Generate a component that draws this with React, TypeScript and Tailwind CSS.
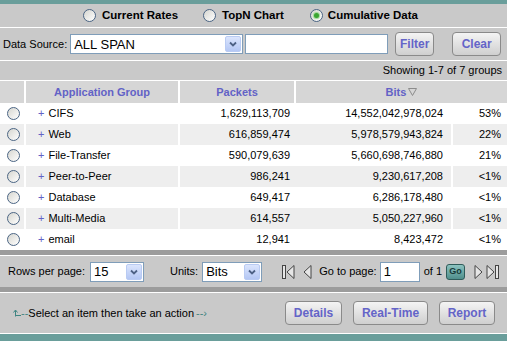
import React from "react";

type Row = {
  name: string;
  packets: string;
  bits: string;
  pct: string;
};

const rows: Row[] = [
  { name: "CIFS", packets: "1,629,113,709", bits: "14,552,042,978,024", pct: "53%" },
  { name: "Web", packets: "616,859,474", bits: "5,978,579,943,824", pct: "22%" },
  { name: "File-Transfer", packets: "590,079,639", bits: "5,660,698,746,880", pct: "21%" },
  { name: "Peer-to-Peer", packets: "986,241", bits: "9,230,617,208", pct: "<1%" },
  { name: "Database", packets: "649,417", bits: "6,286,178,480", pct: "<1%" },
  { name: "Multi-Media", packets: "614,557", bits: "5,050,227,960", pct: "<1%" },
  { name: "email", packets: "12,941", bits: "8,423,472", pct: "<1%" },
];

function Radio({ checked = false }: { checked?: boolean }) {
  return (
    <span className="flex h-[13px] w-[13px] shrink-0 items-center justify-center rounded-full border border-[#4b6584] bg-gradient-to-br from-[#d6d6d0] to-white">
      {checked && (
        <span className="h-[5px] w-[5px] rounded-full bg-[#3aa532] shadow-[0_0_1px_1px_#9ad892]" />
      )}
    </span>
  );
}

function Select({ value, width }: { value: string; width: string }) {
  return (
    <div className={`relative flex h-[20px] items-center border border-[#7f9db9] bg-white ${width}`}>
      <span className="pl-[3px] text-[13px] leading-none text-black">{value}</span>
      <span className="absolute top-[1px] right-[1px] bottom-[1px] flex w-[16px] items-center justify-center rounded-[2px] border border-[#b9cbf3] bg-gradient-to-b from-[#dbe5fd] to-[#b4c7f4]">
        <svg width="8" height="6" viewBox="0 0 8 6">
          <path d="M1 1.5 L4 4.5 L7 1.5" fill="none" stroke="#4d6185" strokeWidth="1.8" />
        </svg>
      </span>
    </div>
  );
}

function Button({ label, width }: { label: string; width: string }) {
  return (
    <button
      className={`flex h-[24px] items-center justify-center rounded-[4px] border border-[#8a8a8a] bg-gradient-to-b from-[#f4f4f4] to-[#cfcfcf] text-[12px] font-bold text-[#6464c8] ${width}`}
    >
      {label}
    </button>
  );
}

function NavIcon({ kind }: { kind: "first" | "prev" | "next" | "last" }) {
  const s = { fill: "#e6e6e6", stroke: "#444", strokeWidth: 1 };
  if (kind === "first")
    return (
      <svg width="13" height="16" viewBox="0 0 13 16">
        <rect x="0.5" y="1.5" width="3" height="13" {...s} />
        <path d="M12 1.5 L5 8 L12 14.5 Z" {...s} />
      </svg>
    );
  if (kind === "prev")
    return (
      <svg width="9" height="16" viewBox="0 0 9 16">
        <path d="M8 1.5 L1 8 L8 14.5 Z" {...s} />
      </svg>
    );
  if (kind === "next")
    return (
      <svg width="9" height="16" viewBox="0 0 9 16">
        <path d="M1 1.5 L8 8 L1 14.5 Z" {...s} />
      </svg>
    );
  return (
    <svg width="13" height="16" viewBox="0 0 13 16">
      <path d="M1 1.5 L8 8 L1 14.5 Z" {...s} />
      <rect x="9.5" y="1.5" width="3" height="13" {...s} />
    </svg>
  );
}

export default function App() {
  return (
    <div className="flex h-[341px] w-[507px] flex-col overflow-hidden bg-[#c9c9c9] font-['Liberation_Sans',Arial,sans-serif] text-[11px] text-black">
      <div className="h-[4px] bg-[#6a9e9b]" />

      {/* view radios */}
      <div className="flex h-[23px] items-center pl-[83px] text-[11.5px] font-bold">
        <Radio />
        <span className="ml-[6px]">Current Rates</span>
        <span className="ml-[25px]">
          <Radio />
        </span>
        <span className="ml-[6px]">TopN Chart</span>
        <span className="ml-[26px]">
          <Radio checked />
        </span>
        <span className="ml-[5px]">Cumulative Data</span>
      </div>
      <div className="h-px bg-white" />

      {/* data source */}
      <div className="flex h-[32px] items-center pl-[3px]">
        <span>Data Source:</span>
        <div className="ml-[3px]">
          <Select value="ALL SPAN" width="w-[173px]" />
        </div>
        <input className="ml-[2px] h-[20px] w-[143px] border border-[#7f9db9] bg-white outline-none" />
        <div className="ml-[7px]">
          <Button label="Filter" width="w-[39px]" />
        </div>
        <div className="ml-[18px]">
          <Button label="Clear" width="w-[49px]" />
        </div>
      </div>
      <div className="h-px bg-white" />

      <div className="flex h-[19px] items-center justify-end pr-[5px]">Showing 1-7 of 7 groups</div>
      <div className="h-px bg-white" />

      {/* table header */}
      <div className="grid h-[22px] grid-cols-[26px_154px_116px_1fr] bg-[#d6d6d6] font-bold text-[#6262c6]">
        <div className="border-r-2 border-white" />
        <div className="flex items-center justify-center border-r-2 border-white">Application Group</div>
        <div className="flex items-center justify-center border-r-2 border-white">Packets</div>
        <div className="flex items-center justify-center">
          Bits
          <svg className="ml-[2px]" width="9" height="8" viewBox="0 0 9 8">
            <path d="M0.5 0.5 L8.5 0.5 L4.5 7.5 Z" fill="none" stroke="#8c8c8c" />
          </svg>
        </div>
      </div>

      {/* rows */}
      {rows.map((r, i) => (
        <div
          key={r.name}
          className={`grid h-[21px] grid-cols-[26px_154px_116px_157px_1fr] ${i % 2 === 0 ? "bg-white" : "bg-[#eeeeee]"}`}
        >
          <div className="flex items-center justify-center border-r-2 border-white pl-[2px]">
            <Radio />
          </div>
          <div className="flex items-center border-r-2 border-white pl-[12px]">
            <span className="text-[#6262c6]">+</span>
            <span className="ml-[4px]">{r.name}</span>
          </div>
          <div className="flex items-center justify-end pr-[6px]">{r.packets}</div>
          <div className="flex items-center justify-end border-r-2 border-white pr-[8px]">{r.bits}</div>
          <div className="flex items-center justify-end pr-[6px]">{r.pct}</div>
        </div>
      ))}

      <div className="h-[5px] bg-[#9c9c9c]" />
      <div className="h-px bg-white" />

      {/* pagination */}
      <div className="flex h-[31px] items-center pl-[8px]">
        <span>Rows per page:</span>
        <div className="ml-[5px]">
          <Select value="15" width="w-[54px]" />
        </div>
        <span className="ml-[26px]">Units:</span>
        <div className="ml-[4px]">
          <Select value="Bits" width="w-[60px]" />
        </div>
        <div className="ml-[20px] flex items-center">
          <NavIcon kind="first" />
        </div>
        <div className="ml-[8px] flex items-center">
          <NavIcon kind="prev" />
        </div>
        <span className="ml-[7px]">Go to page:</span>
        <div className="ml-[3px] flex h-[20px] w-[40px] items-center border border-[#7f9db9] bg-white pl-[3px] text-[13px]">1</div>
        <span className="ml-[4px]">of 1</span>
        <span className="ml-[4px] flex h-[16px] w-[19px] items-center justify-center rounded-[3px] border border-[#2f5c5a] bg-gradient-to-b from-[#8cc3c0] to-[#4f8f8c] text-[9px] font-bold text-[#173a38]">
          Go
        </span>
        <div className="ml-[9px] flex items-center">
          <NavIcon kind="next" />
        </div>
        <div className="ml-[3px] flex items-center">
          <NavIcon kind="last" />
        </div>
      </div>

      <div className="h-[5px] bg-[#9c9c9c]" />
      <div className="h-px bg-white" />

      {/* actions */}
      <div className="flex h-[40px] items-center pl-[13px] pr-[12px]">
        <svg width="8" height="8" viewBox="0 0 8 8">
          <path d="M2.5 7.5 L2.5 1.5 M0.5 3.5 L2.5 1 L4.5 3.5 M2.5 6.5 L8 6.5" fill="none" stroke="#3f8582" strokeWidth="1" />
        </svg>
        <span className="text-[#3f8582]">--</span>
        <span>Select an item then take an action</span>
        <span className="ml-[2px] text-[#3f8582]">--&rsaquo;</span>
        <div className="ml-auto flex items-center gap-[11px]">
          <Button label="Details" width="w-[57px]" />
          <Button label="Real-Time" width="w-[75px]" />
          <Button label="Report" width="w-[56px]" />
        </div>
      </div>
      <div className="h-px bg-white" />
      <div className="flex-1 bg-[#6a9e9b]" />
    </div>
  );
}
